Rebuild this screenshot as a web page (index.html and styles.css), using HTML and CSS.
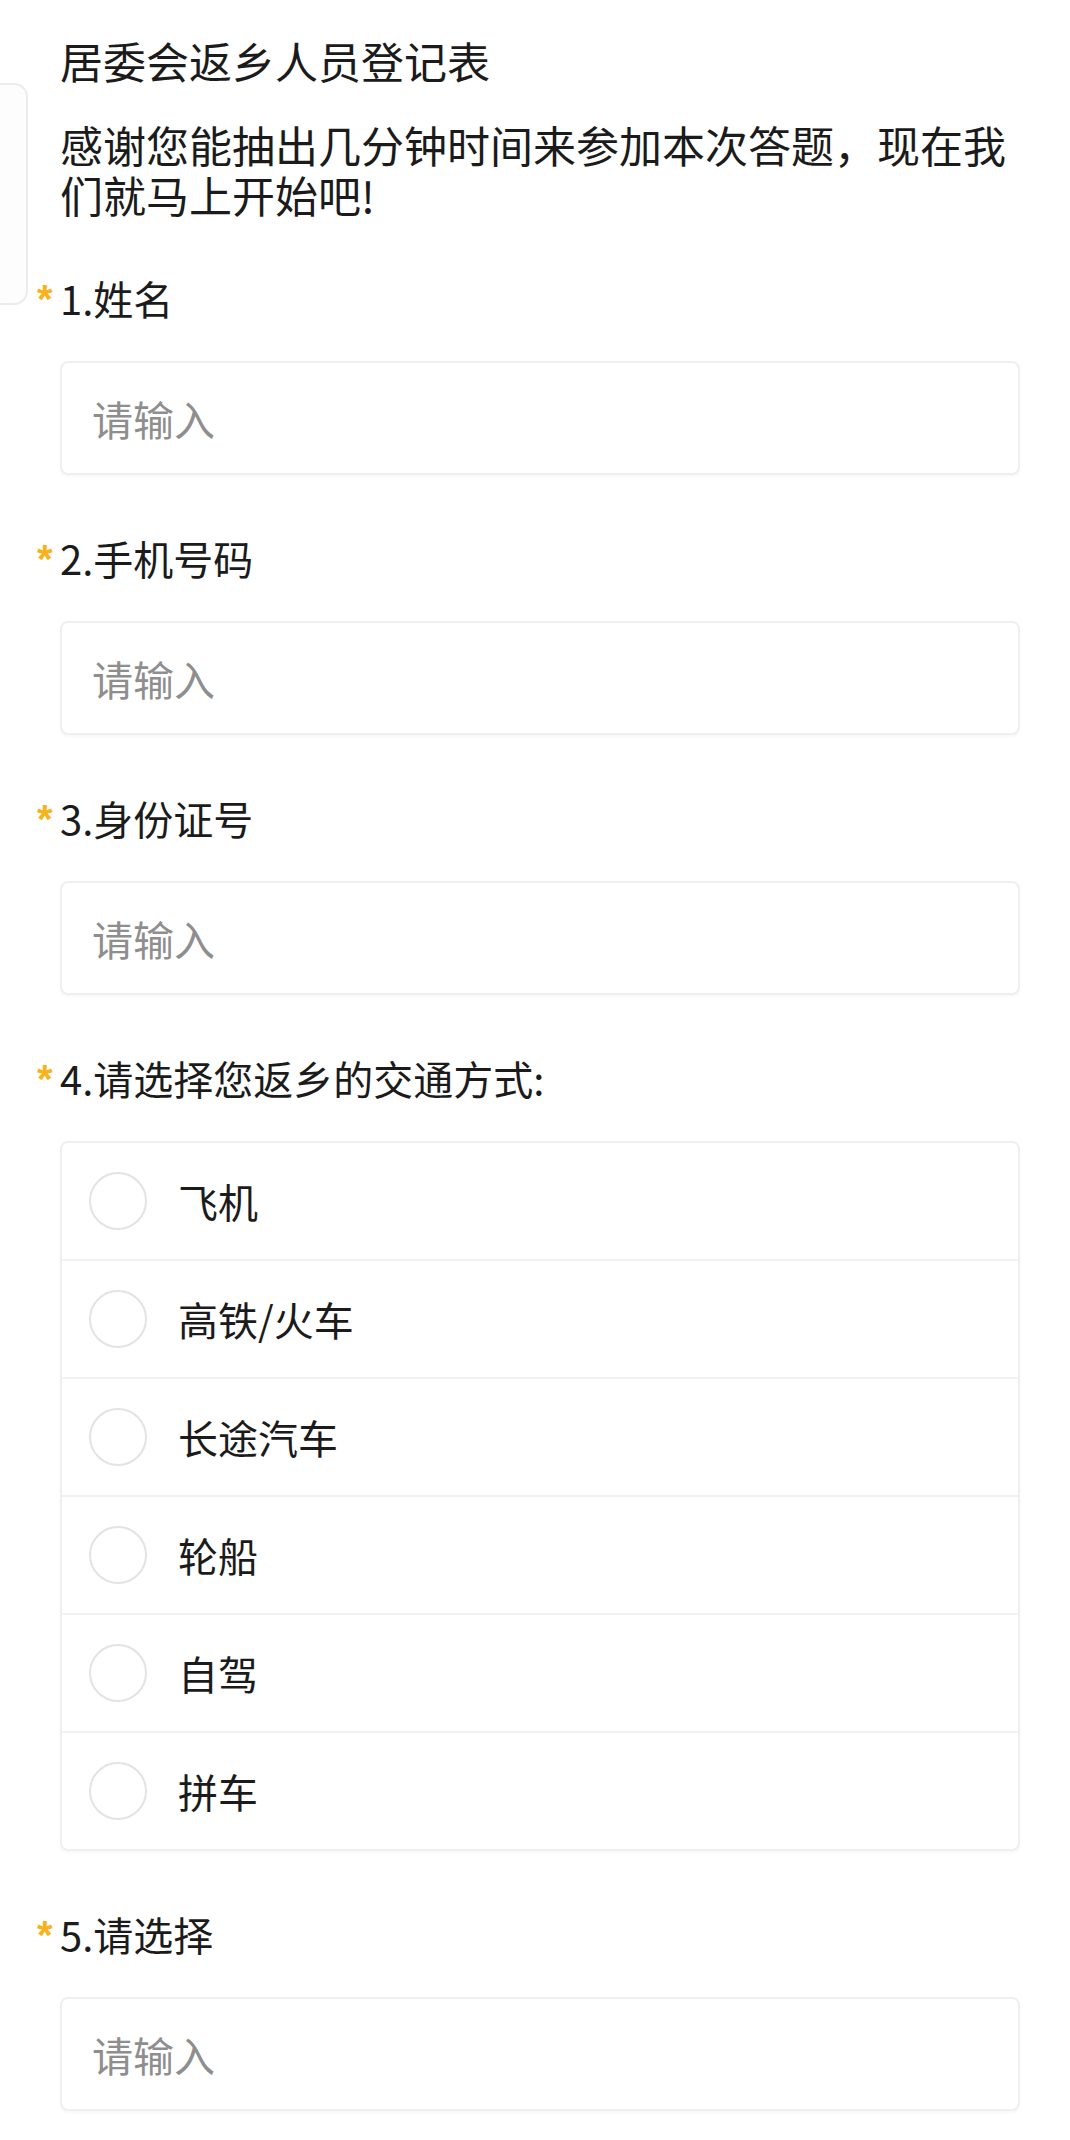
FILE: index.html
```html
<!DOCTYPE html>
<html lang="zh-CN">
<head>
    <meta charset="UTF-8">
    <meta name="viewport" content="width=device-width, initial-scale=1.0">
    <title>居委会返乡人员登记表</title>
    <link rel="stylesheet" href="styles.css">
</head>
<body>
    <div class="side-tab"></div>

    <form class="survey">
        <h1 class="survey-title">居委会返乡人员登记表</h1>
        <p class="survey-desc">感谢您能抽出几分钟时间来参加本次答题，现在我们就马上开始吧!</p>

        <div class="question">
            <div class="question-label"><span class="required">*</span>1.姓名</div>
            <input class="text-input" type="text" placeholder="请输入">
        </div>

        <div class="question">
            <div class="question-label"><span class="required">*</span>2.手机号码</div>
            <input class="text-input" type="text" placeholder="请输入">
        </div>

        <div class="question">
            <div class="question-label"><span class="required">*</span>3.身份证号</div>
            <input class="text-input" type="text" placeholder="请输入">
        </div>

        <div class="question">
            <div class="question-label"><span class="required">*</span>4.请选择您返乡的交通方式:</div>
            <div class="options">
                <label class="option"><input type="radio" name="transport"><span>飞机</span></label>
                <label class="option"><input type="radio" name="transport"><span>高铁/火车</span></label>
                <label class="option"><input type="radio" name="transport"><span>长途汽车</span></label>
                <label class="option"><input type="radio" name="transport"><span>轮船</span></label>
                <label class="option"><input type="radio" name="transport"><span>自驾</span></label>
                <label class="option"><input type="radio" name="transport"><span>拼车</span></label>
            </div>
        </div>

        <div class="question">
            <div class="question-label"><span class="required">*</span>5.请选择</div>
            <input class="text-input" type="text" placeholder="请输入">
        </div>
    </form>
</body>
</html>
```

FILE: styles.css
```css
body {
    margin: 0;
    background-color: #fff;
    font-family: "Noto Sans CJK SC", "Noto Sans", sans-serif;
    color: #1b1b1b;
}

/* floating handle on the left edge */
.side-tab {
    position: absolute;
    left: 0;
    top: 83px;
    width: 26px;
    height: 218px;
    border: 2px solid #ececec;
    border-left: none;
    border-radius: 0 14px 14px 0;
    background-color: #fdfdfd;
}

.survey {
    padding: 35px 50px 40px 60px;
}

.survey-title {
    margin: 0 0 34px;
    font-size: 43px;
    font-weight: normal;
    line-height: 50px;
}

.survey-desc {
    margin: 0 0 54px;
    font-size: 43px;
    line-height: 50px;
}

.question {
    margin-bottom: 58px;
}

.question-label {
    margin-bottom: 38px;
    font-size: 40px;
    line-height: 50px;
}

.question-label .required {
    display: inline-block;
    width: 23px;
    margin-left: -23px;
    color: #f6b31c;
    font-family: "Liberation Sans", sans-serif;
    font-size: 40px;
    font-weight: bold;
    line-height: 40px;
    vertical-align: top;
    padding-top: 6px;
}

.text-input {
    display: block;
    box-sizing: border-box;
    width: 100%;
    height: 114px;
    margin: 0;
    padding: 0 30px;
    border: 2px solid #efefef;
    border-radius: 8px;
    box-shadow: 0 2px 3px rgba(0, 0, 0, 0.03);
    background-color: #fff;
    font-family: inherit;
    font-size: 41px;
    color: #1b1b1b;
    outline: none;
}

.text-input::placeholder {
    color: #8e8e8e;
}

.options {
    border: 2px solid #efefef;
    border-radius: 8px;
    box-shadow: 0 2px 3px rgba(0, 0, 0, 0.03);
}

.option {
    display: flex;
    align-items: center;
    gap: 31px;
    height: 116px;
    padding-left: 27px;
    border-bottom: 2px solid #f1f1f1;
    font-size: 40px;
}

.option:last-child {
    border-bottom: none;
}

.option input {
    appearance: none;
    -webkit-appearance: none;
    box-sizing: border-box;
    width: 58px;
    height: 58px;
    margin: 0;
    border: 2px solid #e3e3e3;
    border-radius: 50%;
    background-color: #fff;
}
```
